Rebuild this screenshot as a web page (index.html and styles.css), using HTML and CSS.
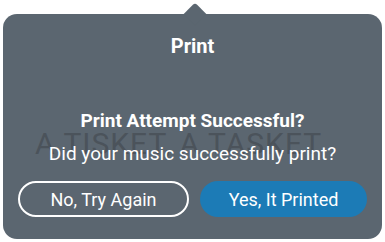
FILE: index.html
```html
<!DOCTYPE html>
<html>
<head>
<meta charset="utf-8">
<link rel="stylesheet" href="styles.css">
</head>
<body>
<div class="wrap">
  <div class="popover">
    <div class="arrow"></div>
    <div class="ghost">A TISKET, A TASKET</div>
    <div class="title">Print</div>
    <div class="question">Print Attempt Successful?</div>
    <div class="sub">Did your music successfully print?</div>
    <div class="actions">
      <button class="btn btn-outline">No, Try Again</button>
      <button class="btn btn-primary">Yes, It Printed</button>
    </div>
  </div>
</div>
</body>
</html>
```
FILE: styles.css
```css
html, body {
  margin: 0;
  padding: 0;
  background: #ffffff;
  width: 385px;
  height: 242px;
  overflow: hidden;
  font-family: Roboto, "Liberation Sans", sans-serif;
}
.wrap {
  padding: 14px 3px 0 3px;
}
.popover {
  position: relative;
  background: #5b6670;
  border-radius: 14px;
  height: 225px;
  box-sizing: border-box;
  padding: 20px 15px 0 15px;
  display: flex;
  flex-direction: column;
  align-items: stretch;
  color: #ffffff;
  text-align: center;
}
.arrow {
  position: absolute;
  top: -8px;
  left: 184px;
  width: 16px;
  height: 16px;
  background: #5b6670;
  transform: rotate(45deg);
  border-radius: 3px 0 0 0;
}
.ghost {
  position: absolute;
  top: 113px;
  left: 32px;
  font-size: 30px;
  line-height: 34px;
  letter-spacing: 1px;
  color: #4b535b;
  white-space: nowrap;
}
.title {
  position: relative;
  font-size: 20px;
  line-height: 24px;
  font-weight: 700;
}
.question {
  position: relative;
  margin-top: 52px;
  font-size: 19px;
  line-height: 22px;
  font-weight: 700;
}
.sub {
  position: relative;
  margin-top: 10px;
  font-size: 19px;
  line-height: 24px;
}
.actions {
  position: relative;
  margin-top: 15px;
  display: flex;
  gap: 11px;
}
.btn {
  flex: 1;
  height: 36px;
  border-radius: 18px;
  font-family: Roboto, "Liberation Sans", sans-serif;
  font-size: 18px;
  color: #ffffff;
  padding: 0;
  box-sizing: border-box;
}
.btn-outline {
  background: transparent;
  border: 2px solid #ffffff;
}
.btn-primary {
  background: #1c7bb6;
  border: none;
}
```
